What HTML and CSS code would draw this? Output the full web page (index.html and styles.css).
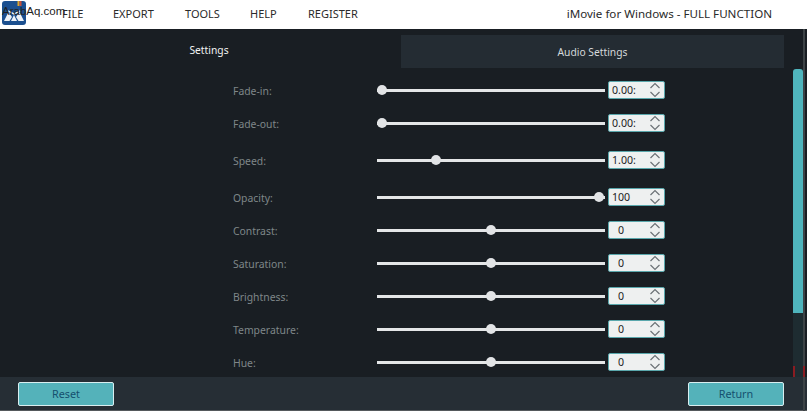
FILE: index.html
```html
<!DOCTYPE html>
<html lang="en">
<head>
<meta charset="utf-8">
<title>iMovie for Windows</title>
<link rel="stylesheet" href="styles.css">
</head>
<body>
<header class="menubar">
  <div class="logo-wrap">
    <svg class="logo" viewBox="0 0 24 24" width="24" height="24">
      <rect width="24" height="24" rx="3" fill="#1b4f8f"/>
      <rect x="15.5" y="0" width="2" height="5" fill="#d9a92f"/>
      <rect x="17.5" y="0" width="2" height="5" fill="#c9503a"/>
      <path d="M2 20 L6.5 11 L10 16 L7.5 20 Z M9 20 L12 14 L15 20 Z M16.5 20 L14 16 L17.5 11 L22 20 Z" fill="#eef2f7"/>
      <path d="M6 10 L12 13 L18 10" fill="none" stroke="#eef2f7" stroke-width="1.4"/>
    </svg>
    <span class="watermark">ArabAq.com</span>
  </div>
  <nav class="menu">
    <span class="menu-item item-file">FILE</span>
    <span class="menu-item item-export">EXPORT</span>
    <span class="menu-item item-tools">TOOLS</span>
    <span class="menu-item item-help">HELP</span>
    <span class="menu-item">REGISTER</span>
  </nav>
  <div class="app-title">iMovie for Windows - FULL FUNCTION</div>
</header>
<main class="panel">
  <div class="tabs">
    <div class="tab tab-active">Settings</div>
    <div class="tab tab-idle">Audio Settings</div>
  </div>
  <div class="content">
    <div class="rows">
      <div class="row"><label class="lbl">Fade-in:</label><div class="slider"><div class="track"></div><i class="thumb" style="left:0%"></i></div><div class="spin"><span class="val">0.00:</span><svg class="arrows" viewBox="0 0 12 16" width="12" height="16"><path d="M1.5 6 L6 1.5 L10.5 6 M1.5 10 L6 14.5 L10.5 10"/></svg></div></div>
      <div class="row"><label class="lbl">Fade-out:</label><div class="slider"><div class="track"></div><i class="thumb" style="left:0%"></i></div><div class="spin"><span class="val">0.00:</span><svg class="arrows" viewBox="0 0 12 16" width="12" height="16"><path d="M1.5 6 L6 1.5 L10.5 6 M1.5 10 L6 14.5 L10.5 10"/></svg></div></div>
      <div class="row row-gap"><label class="lbl">Speed:</label><div class="slider"><div class="track"></div><i class="thumb" style="left:23.7%"></i></div><div class="spin"><span class="val">1.00:</span><svg class="arrows" viewBox="0 0 12 16" width="12" height="16"><path d="M1.5 6 L6 1.5 L10.5 6 M1.5 10 L6 14.5 L10.5 10"/></svg></div></div>
      <div class="row row-gap"><label class="lbl">Opacity:</label><div class="slider"><div class="track"></div><i class="thumb" style="left:95.2%"></i></div><div class="spin"><span class="val">100</span><svg class="arrows" viewBox="0 0 12 16" width="12" height="16"><path d="M1.5 6 L6 1.5 L10.5 6 M1.5 10 L6 14.5 L10.5 10"/></svg></div></div>
      <div class="row"><label class="lbl">Contrast:</label><div class="slider"><div class="track"></div><i class="thumb" style="left:47.8%"></i></div><div class="spin"><span class="val val-int">0</span><svg class="arrows" viewBox="0 0 12 16" width="12" height="16"><path d="M1.5 6 L6 1.5 L10.5 6 M1.5 10 L6 14.5 L10.5 10"/></svg></div></div>
      <div class="row"><label class="lbl">Saturation:</label><div class="slider"><div class="track"></div><i class="thumb" style="left:47.8%"></i></div><div class="spin"><span class="val val-int">0</span><svg class="arrows" viewBox="0 0 12 16" width="12" height="16"><path d="M1.5 6 L6 1.5 L10.5 6 M1.5 10 L6 14.5 L10.5 10"/></svg></div></div>
      <div class="row"><label class="lbl">Brightness:</label><div class="slider"><div class="track"></div><i class="thumb" style="left:47.8%"></i></div><div class="spin"><span class="val val-int">0</span><svg class="arrows" viewBox="0 0 12 16" width="12" height="16"><path d="M1.5 6 L6 1.5 L10.5 6 M1.5 10 L6 14.5 L10.5 10"/></svg></div></div>
      <div class="row"><label class="lbl">Temperature:</label><div class="slider"><div class="track"></div><i class="thumb" style="left:47.8%"></i></div><div class="spin"><span class="val val-int">0</span><svg class="arrows" viewBox="0 0 12 16" width="12" height="16"><path d="M1.5 6 L6 1.5 L10.5 6 M1.5 10 L6 14.5 L10.5 10"/></svg></div></div>
      <div class="row"><label class="lbl">Hue:</label><div class="slider"><div class="track"></div><i class="thumb" style="left:47.8%"></i></div><div class="spin"><span class="val val-int">0</span><svg class="arrows" viewBox="0 0 12 16" width="12" height="16"><path d="M1.5 6 L6 1.5 L10.5 6 M1.5 10 L6 14.5 L10.5 10"/></svg></div></div>
    </div>
    <div class="scroll"><div class="scroll-thumb"></div><div class="scroll-marks"><i></i><i></i></div></div>
  </div>
  <footer class="footer">
    <button class="btn">Reset</button>
    <button class="btn">Return</button>
  </footer>
</main>
</body>
</html>
```
FILE: styles.css
```css
* { box-sizing: border-box; }
html, body { margin: 0; padding: 0; }
body { position: relative; width: 807px; height: 411px; overflow: hidden; background: #191e23; font-family: "Noto Sans", "DejaVu Sans", sans-serif; display: flex; flex-direction: column; }
body::after { content: ""; position: absolute; left: 803px; top: 29px; width: 2px; bottom: 0; background: #3d4346; }

.menubar { height: 29px; background: #fff; display: flex; align-items: center; color: #2a2a2a; font-size: 11px; flex: none; padding-bottom: 2px; }
.logo-wrap { position: relative; width: 62px; height: 27px; padding: 1px 0 0 2px; }
.logo { display: block; }
.watermark { position: absolute; left: 2px; top: 3px; font-family: "Liberation Sans", sans-serif; font-size: 11.5px; line-height: 16px; color: #222; white-space: nowrap; }
.menu { display: flex; }
.menu-item { white-space: nowrap; }
.item-file { width: 51px; }
.item-export { width: 72px; }
.item-tools { width: 65px; }
.item-help { width: 58px; }
.app-title { margin-left: auto; margin-right: 35px; white-space: nowrap; font-size: 11.6px; }

.panel { flex: 1; display: flex; flex-direction: column; min-height: 0; }
.tabs { display: flex; height: 33px; margin-top: 6px; flex: none; padding-right: 23px; font-size: 10.3px; }
.tab { display: flex; align-items: center; justify-content: center; }
.tab-active { width: 401px; color: #f0f2f2; padding-bottom: 4px; padding-left: 17px; }
.tab-idle { flex: 1; background: #242c33; color: #d4d8da; }

.content { flex: 1; min-height: 0; display: flex; justify-content: space-between; overflow: hidden; }
.rows { padding: 6px 0 0 233px; }
.row { display: flex; align-items: center; height: 33px; }
.row-gap { margin-top: 4px; }
.lbl { width: 144px; font-size: 10.4px; color: #7f8789; }
.slider { position: relative; width: 228px; height: 13px; margin-right: 3px; }
.track { position: absolute; left: 0; right: 0; top: 5px; height: 3px; background: #e4e6e7; }
.thumb { position: absolute; top: 1px; width: 10px; height: 10px; border-radius: 50%; background: #e2e4e6; }
.spin { width: 57px; height: 18px; margin-bottom: 1px; background: #eef0f0; border: 1px solid #5aa7ac; border-radius: 2px; display: flex; align-items: center; justify-content: space-between; padding: 0 3px; color: #1d1d1d; font-size: 10.6px; }
.val { white-space: nowrap; }
.val-int { padding-left: 6px; }
.arrows { fill: none; stroke: #6c7276; stroke-width: 1.2; }

.scroll { width: 14px; position: relative; }
.scroll-thumb { position: absolute; left: 0; top: 1px; width: 10px; height: 244px; background: #4fb5bd; border-radius: 3px 3px 0 0; }
.scroll-marks { position: absolute; z-index: 2; top: 245px; bottom: 0; left: 0; width: 12px; display: flex; justify-content: space-between; align-items: flex-end; background: linear-gradient(to right, #1e2c31 10px, transparent 10px); }
.scroll-marks i { width: 2px; height: 11px; background: #8a1c22; }

.footer { height: 34px; flex: none; background: #262e35; border-bottom: 1px solid #55595c; display: flex; justify-content: space-between; align-items: center; padding: 0 23px 0 18px; }
.btn { width: 96px; height: 24px; background: #54b2ba; border: 1px solid #d9eef0; border-radius: 2px; color: #14506f; font-family: inherit; font-size: 10.8px; padding: 0; }
```
